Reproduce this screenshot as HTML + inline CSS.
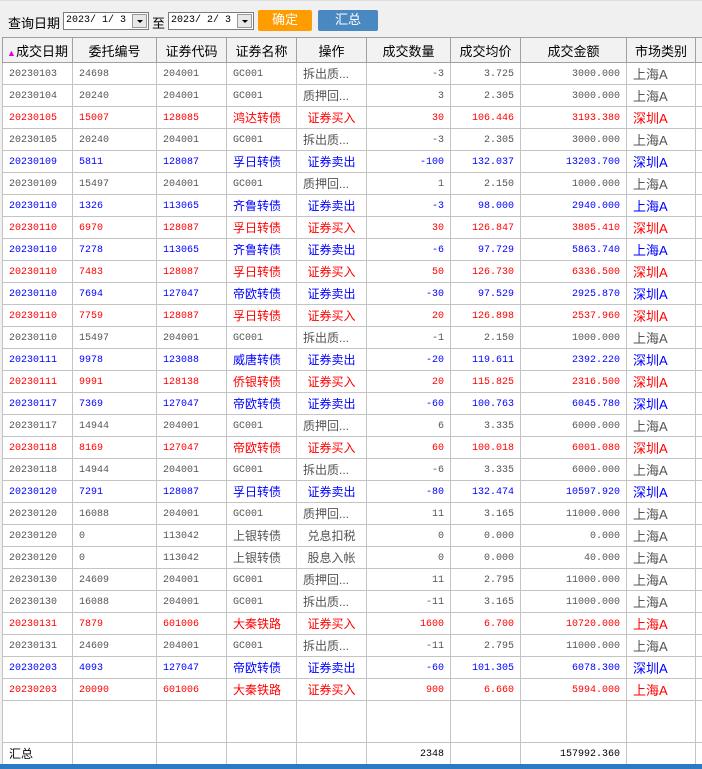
<!DOCTYPE html>
<html><head><meta charset="utf-8"><style>
*{margin:0;padding:0;box-sizing:border-box}
body{width:702px;height:769px;overflow:hidden;background:#f0f0f0;font-family:"Liberation Sans","Noto Sans CJK SC",sans-serif;font-size:12px;position:relative}
.bar{position:absolute;left:0;top:0;width:702px;height:37px;background:#f0f0f0;border-top:1px solid #ddd}
.lbl{position:absolute;top:13px;font-size:13px;color:#000}
.dt{position:absolute;top:12px;width:86px;height:18px;background:#fff;border:1px solid #7a7a7a;font-family:"Liberation Mono",monospace;font-size:10px;line-height:16px;padding-left:2px;white-space:pre;overflow:hidden}
.dt i{position:absolute;right:1px;top:1px;width:15px;height:14px;background:#e8e8e8;border:1px solid #999}
.dt i:after{content:"";position:absolute;left:4px;top:5px;border-left:3px solid transparent;border-right:3px solid transparent;border-top:3px solid #000}
.btn{position:absolute;top:10px;height:21px;color:#fff;font-size:13px;text-align:center;line-height:20px;border-radius:2px}
table{position:absolute;left:2px;top:37px;width:716px;border-collapse:collapse;table-layout:fixed;background:#fff}
td,th{border:1px solid #c4c4c4;height:22px;padding:0 6px;white-space:nowrap;overflow:hidden;font-weight:normal}
th{background:#f2f2f2;height:25px;font-size:13px;border-color:#a0a0a0;text-align:center;color:#000}
td{font-size:12px}
td.n{font-family:"Liberation Mono",monospace;font-size:10px;padding-top:1px}
td.r{text-align:right}
td.c{text-align:center}
tr.g td{color:#555}tr.x td{color:#f00}tr.b td{color:#00f}
td.m{font-size:13px}
tr.e td{height:42px}
tr.s td{color:#000}
.blue{position:absolute;left:0;top:764px;width:702px;height:5px;background:#2d7ac4}
</style></head><body>
<div class="bar"></div>
<span class="lbl" style="left:8px">查询日期</span>
<div class="dt" style="left:63px">2023/ 1/ 3<i></i></div>
<span class="lbl" style="left:152px">至</span>
<div class="dt" style="left:168px">2023/ 2/ 3<i></i></div>
<div class="btn" style="left:258px;width:54px;background:#ff9c00">确定</div>
<div class="btn" style="left:318px;width:60px;background:#4a88c2">汇总</div>
<table>
<colgroup><col style="width:70px"><col style="width:84px"><col style="width:70px"><col style="width:70px"><col style="width:70px"><col style="width:84px"><col style="width:70px"><col style="width:106px"><col style="width:69px"><col style="width:23px"></colgroup>
<tr><th style="padding:0 2px"><span style="color:#e000e0;font-size:9px">▲</span>成交日期</th><th>委托编号</th><th>证券代码</th><th>证券名称</th><th>操作</th><th>成交数量</th><th>成交均价</th><th>成交金额</th><th>市场类别</th><th></th></tr>
<tr class="g"><td class="n">20230103</td><td class="n">24698</td><td class="n">204001</td><td class="n">GC001</td><td>拆出质...</td><td class="n r">-3</td><td class="n r">3.725</td><td class="n r">3000.000</td><td class="m">上海A</td><td></td></tr>
<tr class="g"><td class="n">20230104</td><td class="n">20240</td><td class="n">204001</td><td class="n">GC001</td><td>质押回...</td><td class="n r">3</td><td class="n r">2.305</td><td class="n r">3000.000</td><td class="m">上海A</td><td></td></tr>
<tr class="x"><td class="n">20230105</td><td class="n">15007</td><td class="n">128085</td><td>鸿达转债</td><td class="c">证券买入</td><td class="n r">30</td><td class="n r">106.446</td><td class="n r">3193.380</td><td class="m">深圳A</td><td></td></tr>
<tr class="g"><td class="n">20230105</td><td class="n">20240</td><td class="n">204001</td><td class="n">GC001</td><td>拆出质...</td><td class="n r">-3</td><td class="n r">2.305</td><td class="n r">3000.000</td><td class="m">上海A</td><td></td></tr>
<tr class="b"><td class="n">20230109</td><td class="n">5811</td><td class="n">128087</td><td>孚日转债</td><td class="c">证券卖出</td><td class="n r">-100</td><td class="n r">132.037</td><td class="n r">13203.700</td><td class="m">深圳A</td><td></td></tr>
<tr class="g"><td class="n">20230109</td><td class="n">15497</td><td class="n">204001</td><td class="n">GC001</td><td>质押回...</td><td class="n r">1</td><td class="n r">2.150</td><td class="n r">1000.000</td><td class="m">上海A</td><td></td></tr>
<tr class="b"><td class="n">20230110</td><td class="n">1326</td><td class="n">113065</td><td>齐鲁转债</td><td class="c">证券卖出</td><td class="n r">-3</td><td class="n r">98.000</td><td class="n r">2940.000</td><td class="m">上海A</td><td></td></tr>
<tr class="x"><td class="n">20230110</td><td class="n">6970</td><td class="n">128087</td><td>孚日转债</td><td class="c">证券买入</td><td class="n r">30</td><td class="n r">126.847</td><td class="n r">3805.410</td><td class="m">深圳A</td><td></td></tr>
<tr class="b"><td class="n">20230110</td><td class="n">7278</td><td class="n">113065</td><td>齐鲁转债</td><td class="c">证券卖出</td><td class="n r">-6</td><td class="n r">97.729</td><td class="n r">5863.740</td><td class="m">上海A</td><td></td></tr>
<tr class="x"><td class="n">20230110</td><td class="n">7483</td><td class="n">128087</td><td>孚日转债</td><td class="c">证券买入</td><td class="n r">50</td><td class="n r">126.730</td><td class="n r">6336.500</td><td class="m">深圳A</td><td></td></tr>
<tr class="b"><td class="n">20230110</td><td class="n">7694</td><td class="n">127047</td><td>帝欧转债</td><td class="c">证券卖出</td><td class="n r">-30</td><td class="n r">97.529</td><td class="n r">2925.870</td><td class="m">深圳A</td><td></td></tr>
<tr class="x"><td class="n">20230110</td><td class="n">7759</td><td class="n">128087</td><td>孚日转债</td><td class="c">证券买入</td><td class="n r">20</td><td class="n r">126.898</td><td class="n r">2537.960</td><td class="m">深圳A</td><td></td></tr>
<tr class="g"><td class="n">20230110</td><td class="n">15497</td><td class="n">204001</td><td class="n">GC001</td><td>拆出质...</td><td class="n r">-1</td><td class="n r">2.150</td><td class="n r">1000.000</td><td class="m">上海A</td><td></td></tr>
<tr class="b"><td class="n">20230111</td><td class="n">9978</td><td class="n">123088</td><td>威唐转债</td><td class="c">证券卖出</td><td class="n r">-20</td><td class="n r">119.611</td><td class="n r">2392.220</td><td class="m">深圳A</td><td></td></tr>
<tr class="x"><td class="n">20230111</td><td class="n">9991</td><td class="n">128138</td><td>侨银转债</td><td class="c">证券买入</td><td class="n r">20</td><td class="n r">115.825</td><td class="n r">2316.500</td><td class="m">深圳A</td><td></td></tr>
<tr class="b"><td class="n">20230117</td><td class="n">7369</td><td class="n">127047</td><td>帝欧转债</td><td class="c">证券卖出</td><td class="n r">-60</td><td class="n r">100.763</td><td class="n r">6045.780</td><td class="m">深圳A</td><td></td></tr>
<tr class="g"><td class="n">20230117</td><td class="n">14944</td><td class="n">204001</td><td class="n">GC001</td><td>质押回...</td><td class="n r">6</td><td class="n r">3.335</td><td class="n r">6000.000</td><td class="m">上海A</td><td></td></tr>
<tr class="x"><td class="n">20230118</td><td class="n">8169</td><td class="n">127047</td><td>帝欧转债</td><td class="c">证券买入</td><td class="n r">60</td><td class="n r">100.018</td><td class="n r">6001.080</td><td class="m">深圳A</td><td></td></tr>
<tr class="g"><td class="n">20230118</td><td class="n">14944</td><td class="n">204001</td><td class="n">GC001</td><td>拆出质...</td><td class="n r">-6</td><td class="n r">3.335</td><td class="n r">6000.000</td><td class="m">上海A</td><td></td></tr>
<tr class="b"><td class="n">20230120</td><td class="n">7291</td><td class="n">128087</td><td>孚日转债</td><td class="c">证券卖出</td><td class="n r">-80</td><td class="n r">132.474</td><td class="n r">10597.920</td><td class="m">深圳A</td><td></td></tr>
<tr class="g"><td class="n">20230120</td><td class="n">16088</td><td class="n">204001</td><td class="n">GC001</td><td>质押回...</td><td class="n r">11</td><td class="n r">3.165</td><td class="n r">11000.000</td><td class="m">上海A</td><td></td></tr>
<tr class="g"><td class="n">20230120</td><td class="n">0</td><td class="n">113042</td><td>上银转债</td><td class="c">兑息扣税</td><td class="n r">0</td><td class="n r">0.000</td><td class="n r">0.000</td><td class="m">上海A</td><td></td></tr>
<tr class="g"><td class="n">20230120</td><td class="n">0</td><td class="n">113042</td><td>上银转债</td><td class="c">股息入帐</td><td class="n r">0</td><td class="n r">0.000</td><td class="n r">40.000</td><td class="m">上海A</td><td></td></tr>
<tr class="g"><td class="n">20230130</td><td class="n">24609</td><td class="n">204001</td><td class="n">GC001</td><td>质押回...</td><td class="n r">11</td><td class="n r">2.795</td><td class="n r">11000.000</td><td class="m">上海A</td><td></td></tr>
<tr class="g"><td class="n">20230130</td><td class="n">16088</td><td class="n">204001</td><td class="n">GC001</td><td>拆出质...</td><td class="n r">-11</td><td class="n r">3.165</td><td class="n r">11000.000</td><td class="m">上海A</td><td></td></tr>
<tr class="x"><td class="n">20230131</td><td class="n">7879</td><td class="n">601006</td><td>大秦铁路</td><td class="c">证券买入</td><td class="n r">1600</td><td class="n r">6.700</td><td class="n r">10720.000</td><td class="m">上海A</td><td></td></tr>
<tr class="g"><td class="n">20230131</td><td class="n">24609</td><td class="n">204001</td><td class="n">GC001</td><td>拆出质...</td><td class="n r">-11</td><td class="n r">2.795</td><td class="n r">11000.000</td><td class="m">上海A</td><td></td></tr>
<tr class="b"><td class="n">20230203</td><td class="n">4093</td><td class="n">127047</td><td>帝欧转债</td><td class="c">证券卖出</td><td class="n r">-60</td><td class="n r">101.305</td><td class="n r">6078.300</td><td class="m">深圳A</td><td></td></tr>
<tr class="x"><td class="n">20230203</td><td class="n">20090</td><td class="n">601006</td><td>大秦铁路</td><td class="c">证券买入</td><td class="n r">900</td><td class="n r">6.660</td><td class="n r">5994.000</td><td class="m">上海A</td><td></td></tr>
<tr class="e"><td></td><td></td><td></td><td></td><td></td><td></td><td></td><td></td><td></td><td></td></tr>
<tr class="s"><td>汇总</td><td></td><td></td><td></td><td></td><td class="n r">2348</td><td></td><td class="n r">157992.360</td><td></td><td></td></tr>
</table>
<div class="blue"></div>
</body></html>
